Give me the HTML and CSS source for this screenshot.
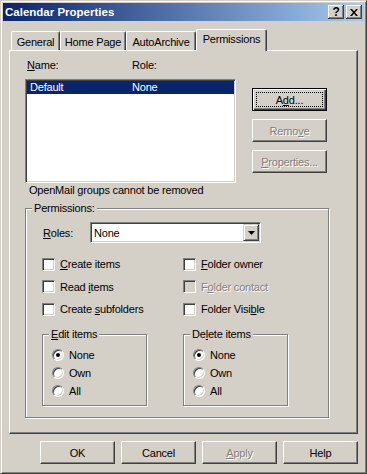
FILE: index.html
```html
<!DOCTYPE html>
<html lang="en">
<head>
  <meta charset="UTF-8">
  <title>Calendar Properties</title>
  <link rel="stylesheet" href="styles.css">
</head>
<body>
  <div class="window">
    <div class="titlebar">
      <span class="title">Calendar Properties</span>
      <div class="caption-buttons">
        <span class="cap-btn">?</span>
        <span class="cap-btn">
          <svg width="8" height="7" viewBox="0 0 8 7">
            <path d="M0 0h2l2 2.5 2-2.5h2l-3 3.5 3 3.5h-2l-2-2.5-2 2.5h-2l3-3.5z" fill="#000"/>
          </svg>
        </span>
      </div>
    </div>

    <div class="dialog">
      <div class="tabs">
        <div class="tab tab-general">General</div>
        <div class="tab tab-home">Home Page</div>
        <div class="tab tab-archive">AutoArchive</div>
        <div class="tab tab-perm selected">Permissions</div>
      </div>

      <div class="panel">
        <div class="members">
          <div class="members-left">
            <div class="list-head">
              <span class="head-name"><u>N</u>ame:</span>
              <span>Role:</span>
            </div>
            <div class="listbox">
              <div class="list-row selected">
                <span class="row-name">Default</span>
                <span>None</span>
              </div>
            </div>
            <div class="note">OpenMail groups cannot be removed</div>
          </div>
          <div class="members-buttons">
            <button class="btn default">A<u>d</u>d...</button>
            <button class="btn" disabled>Remo<u>v</u>e</button>
            <button class="btn" disabled><u>P</u>roperties...</button>
          </div>
        </div>

        <fieldset class="group perms">
          <legend>Permissions:</legend>
          <div class="perms-body">
            <div class="roles-row">
              <span class="roles-label"><u>R</u>oles:</span>
              <div class="combo">
                <span class="combo-value">None</span>
                <span class="combo-btn">
                  <svg width="7" height="4" viewBox="0 0 7 4"><path d="M0 0h7l-3.5 4z" fill="#000"/></svg>
                </span>
              </div>
            </div>

            <div class="checks">
              <label class="check"><span class="box"></span><span><u>C</u>reate items</span></label>
              <label class="check"><span class="box"></span><span><u>F</u>older owner</span></label>
              <label class="check"><span class="box"></span><span>Read <u>i</u>tems</span></label>
              <label class="check disabled"><span class="box"></span><span>F<u>o</u>lder contact</span></label>
              <label class="check"><span class="box"></span><span>Create <u>s</u>ubfolders</span></label>
              <label class="check"><span class="box"></span><span>Folder Visi<u>b</u>le</span></label>
            </div>

            <div class="subgroups">
              <fieldset class="group sub">
                <legend><u>E</u>dit items</legend>
                <div class="radios">
                  <label class="radio"><span class="dot checked"></span>None</label>
                  <label class="radio"><span class="dot"></span>Own</label>
                  <label class="radio"><span class="dot"></span>All</label>
                </div>
              </fieldset>
              <fieldset class="group sub">
                <legend>De<u>l</u>ete items</legend>
                <div class="radios">
                  <label class="radio"><span class="dot checked"></span>None</label>
                  <label class="radio"><span class="dot"></span>Own</label>
                  <label class="radio"><span class="dot"></span>All</label>
                </div>
              </fieldset>
            </div>
          </div>
        </fieldset>
      </div>

      <div class="footer">
        <button class="btn">OK</button>
        <button class="btn">Cancel</button>
        <button class="btn" disabled><u>A</u>pply</button>
        <button class="btn">Help</button>
      </div>
    </div>
  </div>
</body>
</html>
```

FILE: styles.css
```css
html, body {
  margin: 0;
  padding: 0;
}
body {
  font-family: "Liberation Sans", "DejaVu Sans", sans-serif;
  font-size: 11px;
  letter-spacing: -0.2px;
  color: #000;
  background: #d4d0c8;
}
u {
  text-decoration: underline;
  text-underline-offset: 1px;
}

/* window frame */
.window {
  width: 367px;
  height: 474px;
  box-sizing: border-box;
  border: 1px solid;
  border-color: #d4d0c8 #404040 #404040 #d4d0c8;
  box-shadow: inset 1px 1px #fff, inset -1px -1px #808080;
  padding: 2px;
  background: #d4d0c8;
}
.titlebar {
  height: 18px;
  display: flex;
  align-items: center;
  justify-content: space-between;
  background: linear-gradient(to right, #0a246a, #a6caf0);
}
.title {
  color: #fff;
  font-weight: bold;
  font-size: 11.5px;
  letter-spacing: 0;
  padding-left: 2px;
}
.caption-buttons {
  display: flex;
  gap: 2px;
  margin-right: 2px;
}
.cap-btn {
  width: 16px;
  height: 14px;
  box-sizing: border-box;
  display: flex;
  align-items: center;
  justify-content: center;
  background: #d4d0c8;
  box-shadow: inset -1px -1px #404040, inset 1px 1px #fff, inset -2px -2px #808080;
  font-weight: bold;
  font-size: 12px;
  line-height: 14px;
}

/* dialog body */
.dialog {
  padding: 0 6px;
}
.tabs {
  display: flex;
  align-items: flex-end;
  margin-top: 8px;
  padding-left: 2px;
}
.tab {
  height: 19px;
  box-sizing: border-box;
  border-left: 1px solid #fff;
  border-top: 1px solid #fff;
  border-right: 1px solid #404040;
  border-radius: 2px 2px 0 0;
  box-shadow: inset -1px 0 #808080;
  text-align: center;
  line-height: 14px;
  padding-top: 3px;
}
.tab-general { width: 49px; }
.tab-home { width: 66px; }
.tab-archive { width: 70px; }
.tab-perm { width: 71px; }
.tab.selected {
  height: 22px;
  margin-bottom: -1px;
  padding-top: 2px;
  position: relative;
  z-index: 1;
  background: #d4d0c8;
}

.panel {
  height: 384px;
  box-sizing: border-box;
  border: 1px solid;
  border-color: #fff #404040 #404040 #fff;
  box-shadow: inset -1px -1px #808080;
  padding: 7px 0 0 15px;
}
.members {
  display: flex;
}
.members-left {
  width: 211px;
}
.list-head {
  height: 21px;
  line-height: 14px;
  display: flex;
}
.head-name {
  width: 107px;
  padding-left: 2px;
  box-sizing: border-box;
}
.listbox {
  height: 104px;
  box-sizing: border-box;
  border: 1px solid;
  border-color: #808080 #fff #fff #808080;
  box-shadow: inset 1px 1px #404040, inset -1px -1px #d4d0c8;
  padding: 1px;
  background: #fff;
}
.list-row {
  height: 13px;
  line-height: 13px;
  display: flex;
}
.list-row.selected {
  background: #0a246a;
  color: #fff;
}
.row-name {
  width: 105px;
  padding-left: 3px;
  box-sizing: border-box;
}
.note {
  line-height: 14px;
  padding-left: 4px;
}
.members-buttons {
  margin-left: 16px;
  padding-top: 30px;
  display: flex;
  flex-direction: column;
  gap: 8px;
}

/* push buttons */
.btn {
  width: 75px;
  height: 23px;
  padding: 0;
  font: inherit;
  letter-spacing: inherit;
  color: #000;
  background: #d4d0c8;
  border: 1px solid;
  border-color: #fff #404040 #404040 #fff;
  box-shadow: inset -1px -1px #808080;
  border-radius: 0;
  position: relative;
}
.btn:disabled {
  color: #808080;
  text-shadow: 1px 1px #fff;
}
.btn.default {
  border-color: #000;
  box-shadow: inset 1px 1px #fff, inset -1px -1px #404040, inset -2px -2px #808080;
}
.btn.default::after {
  content: "";
  position: absolute;
  left: 3px;
  top: 3px;
  right: 3px;
  bottom: 3px;
  border: 1px dotted #000;
}

/* group boxes */
.group {
  margin: 0;
  padding: 0;
  border: 1px solid #808080;
  box-shadow: inset 1px 1px #fff, 1px 1px #fff;
  min-width: 0;
}
.group legend {
  padding: 0 2px;
  margin-left: 6px;
  line-height: 13px;
  background: #d4d0c8;
  position: relative;
}
.perms {
  width: 302px;
  margin-top: 5px;
}
.perms-body {
  padding: 7px 0 11px 16px;
}
.roles-row {
  display: flex;
  align-items: center;
  height: 21px;
}
.roles-label {
  width: 48px;
  padding-left: 1px;
  box-sizing: border-box;
}
.combo {
  width: 171px;
  height: 21px;
  box-sizing: border-box;
  border: 1px solid;
  border-color: #808080 #fff #fff #808080;
  box-shadow: inset 1px 1px #404040, inset -1px -1px #d4d0c8;
  padding: 1px;
  background: #fff;
  display: flex;
  align-items: center;
}
.combo-value {
  flex: 1;
  padding-left: 2px;
}
.combo-btn {
  width: 16px;
  height: 17px;
  box-sizing: border-box;
  background: #d4d0c8;
  border: 1px solid;
  border-color: #d4d0c8 #404040 #404040 #d4d0c8;
  box-shadow: inset 1px 1px #fff, inset -1px -1px #808080;
  display: flex;
  align-items: center;
  justify-content: center;
}

.checks {
  margin-top: 10px;
  display: grid;
  grid-template-columns: 141px 1fr;
  grid-template-rows: 22px 23px 22px;
}
.check {
  display: flex;
  align-items: center;
  gap: 5px;
}
.box {
  width: 13px;
  height: 13px;
  box-sizing: border-box;
  border: 1px solid;
  border-color: #808080 #fff #fff #808080;
  box-shadow: inset 1px 1px #404040, inset -1px -1px #d4d0c8;
  background: #fff;
}
.check.disabled {
  color: #808080;
  text-shadow: 1px 1px #fff;
}
.check.disabled .box {
  background: #d4d0c8;
}

.subgroups {
  margin-top: 8px;
  display: grid;
  grid-template-columns: 141px 1fr;
}
.sub {
  width: 103px;
}
.radios {
  padding: 5px 0 5px 9px;
}
.radio {
  height: 18px;
  display: flex;
  align-items: center;
  gap: 5px;
}
.dot {
  width: 12px;
  height: 12px;
  box-sizing: border-box;
  border-radius: 50%;
  border: 1px solid;
  border-color: #808080 #fff #fff #808080;
  box-shadow: inset 1px 1px #404040, inset -1px -1px #d4d0c8;
  background: #fff;
  display: flex;
  align-items: center;
  justify-content: center;
}
.dot.checked::after {
  content: "";
  width: 4px;
  height: 4px;
  border-radius: 50%;
  background: #000;
}

.footer {
  display: flex;
  justify-content: flex-end;
  gap: 6px;
  margin-top: 7px;
}
```
